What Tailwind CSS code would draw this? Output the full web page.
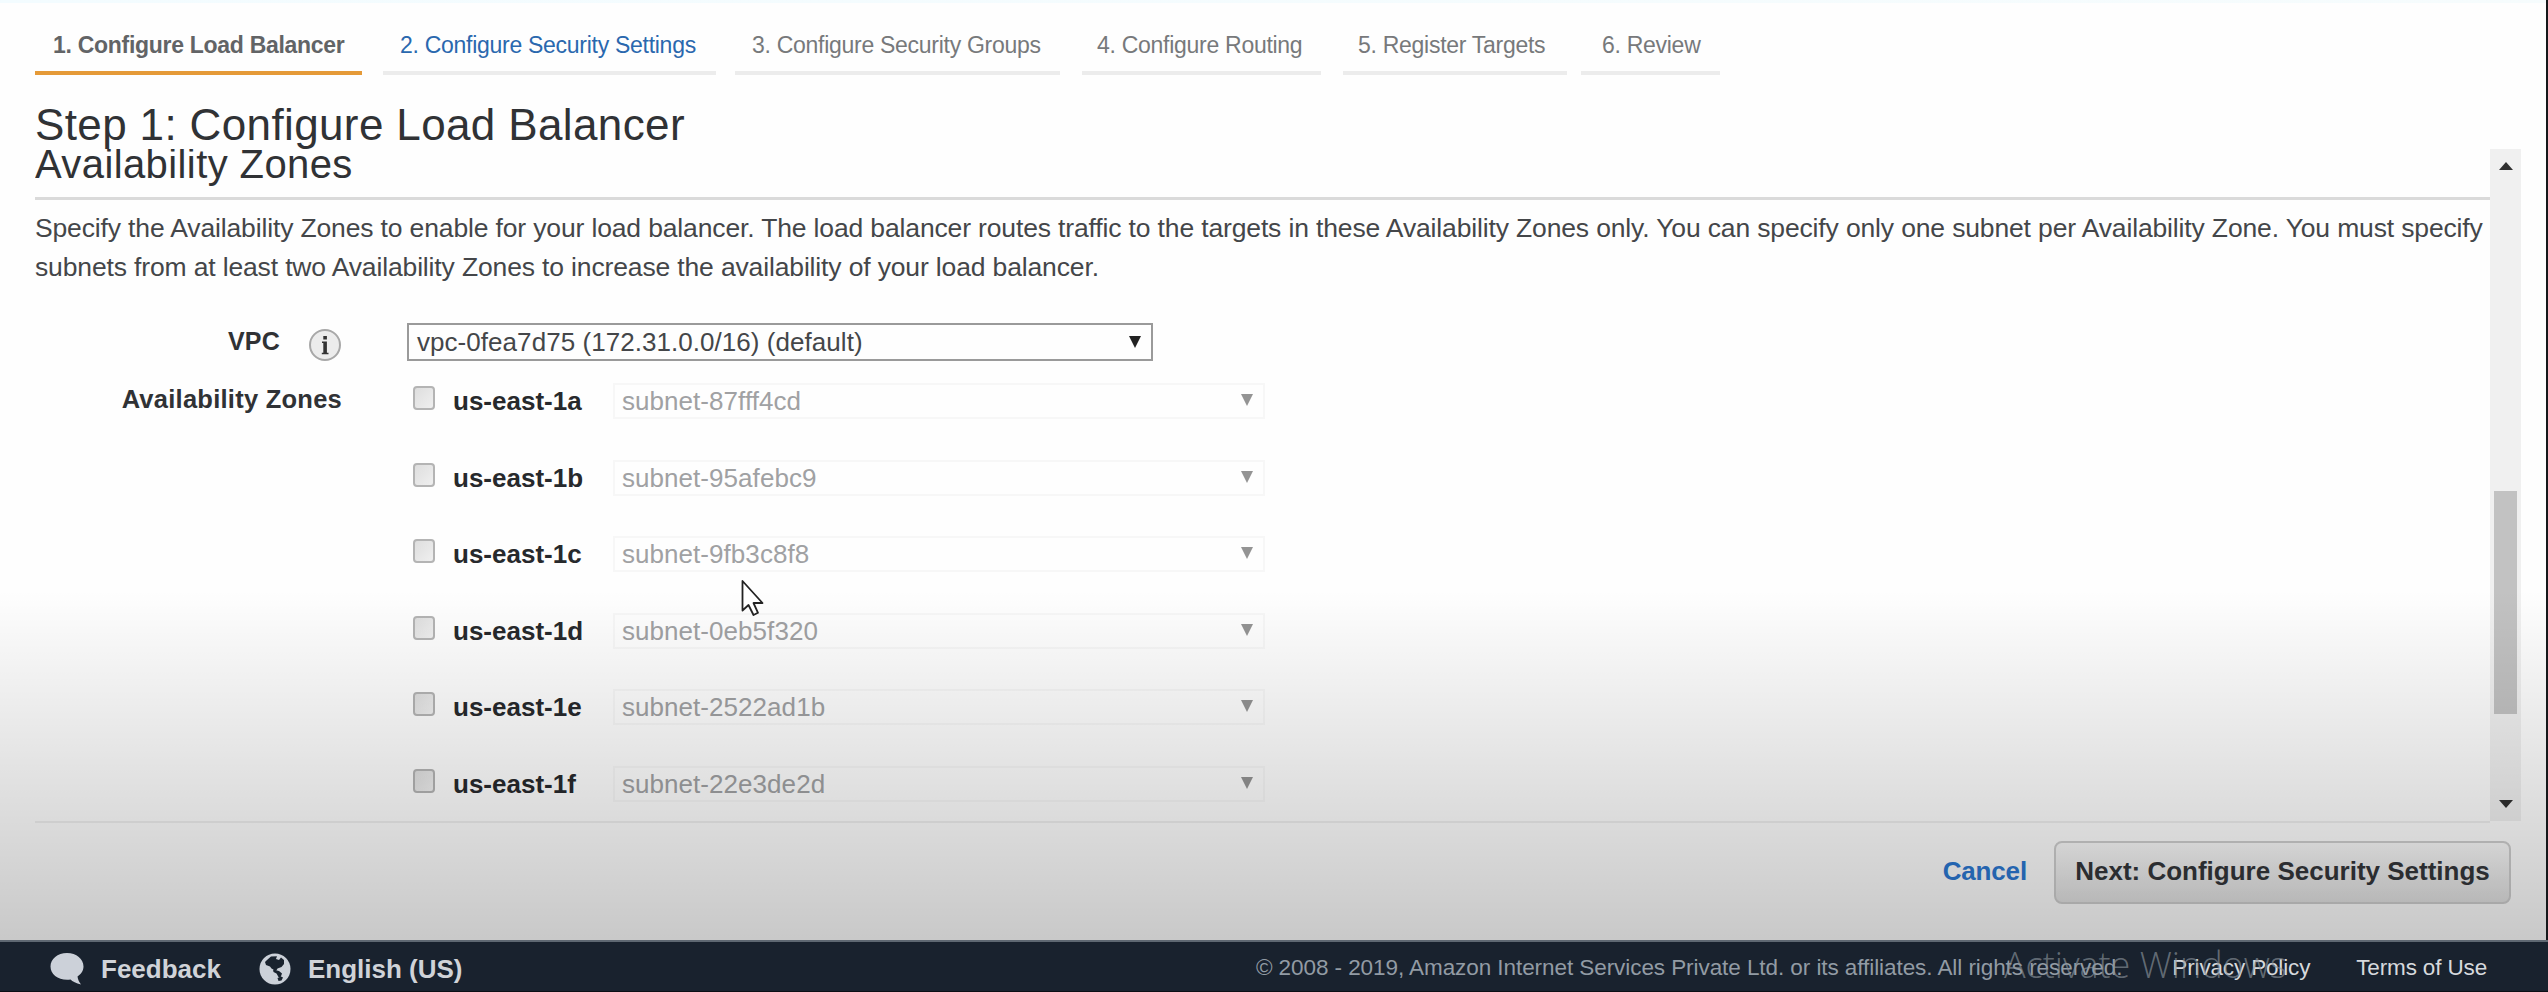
<!DOCTYPE html>
<html lang="en">
<head>
<meta charset="utf-8">
<title>Configure Load Balancer</title>
<script src="https://cdn.jsdelivr.net/npm/@tailwindcss/browser@4"></script>
</head>
<body class="relative flex h-[992px] w-[2548px] flex-col overflow-hidden bg-[#fefefe] font-['Liberation_Sans',Arial,sans-serif] text-[#444649] whitespace-nowrap">
  <div class="h-[3px] shrink-0 bg-linear-to-r from-[#f3fcff] to-[#f6fcfd]"></div>

  <!-- Wizard steps -->
  <nav class="flex h-[72px] shrink-0 pl-[35px] text-[23px] leading-[30px] tracking-[-0.28px] text-[#77797b]">
    <div class="mr-[21px] w-[327px] border-b-4 border-[#e59a38] pt-[27px] pl-[18px] font-bold tracking-[-0.29px] text-[#626466]">1. Configure Load Balancer</div>
    <div class="mr-[19px] w-[333px] border-b-4 border-[#ececec] pt-[27px] pl-[17px] text-[#2a68ae]">2. Configure Security Settings</div>
    <div class="mr-[22px] w-[325px] border-b-4 border-[#ececec] pt-[27px] pl-[17px]">3. Configure Security Groups</div>
    <div class="mr-[22px] w-[239px] border-b-4 border-[#ececec] pt-[27px] pl-[15px]">4. Configure Routing</div>
    <div class="mr-[14px] w-[224px] border-b-4 border-[#ececec] pt-[27px] pl-[15px]">5. Register Targets</div>
    <div class="w-[139px] border-b-4 border-[#ececec] pt-[27px] pl-[21px]">6. Review</div>
  </nav>

  <h1 class="h-[74px] shrink-0 pt-[28px] pl-[35px] text-[44px] leading-[44px] tracking-[0.37px] text-[#303235]">Step 1: Configure Load Balancer</h1>

  <!-- Scrolling form -->
  <div class="ml-[35px] flex h-[672px] shrink-0">
    <main class="w-[2455px] overflow-hidden">
      <h2 class="-mt-[7px] h-[58px] border-b-3 border-[#dadada] text-[40px] leading-[44px] tracking-[0.4px] text-[#303235]">Availability Zones</h2>
      <p class="mt-[9px] text-[26.5px] leading-[39px] tracking-[-0.145px]">Specify the Availability Zones to enable for your load balancer. The load balancer routes traffic to the targets in these Availability Zones only. You can specify only one subnet per Availability Zone. You must specify<br>subnets from at least two Availability Zones to increase the availability of your load balancer.</p>

      <div class="mt-[36px] flex h-[37px] items-start">
        <div class="w-[245px] text-right text-[25px] leading-[37px] font-bold tracking-[0.2px] text-[#303235]">VPC</div>
        <svg class="mt-[5px] ml-[28px] h-[34px] w-[34px]" viewBox="0 0 34 34"><circle cx="17" cy="17" r="15" fill="#ececec" stroke="#a8a8a8" stroke-width="2"/><rect x="15.300" y="8" width="3.600" height="3.500" fill="#333"/><path d="M14 13.500H18.900V24.800H20.500V26.200H13.800V24.800H15.300V14.900H14Z" fill="#333"/></svg>
        <div class="ml-[65px] flex h-[38px] w-[746px] items-center justify-between border-2 border-[#9a9a9a] pr-[10px] pl-[8px] text-[26px] leading-[34px] tracking-[0.05px]">
          <span>vpc-0fea7d75 (172.31.0.0/16) (default)</span>
          <svg class="h-[12px] w-[12px]" viewBox="0 0 12 12"><path d="M0 0H12L6 12Z" fill="#222"/></svg>
        </div>
      </div>

      <div class="mt-[23px] flex">
        <div class="w-[307px] text-right text-[25.500px] leading-[33px] font-bold tracking-[0.25px] text-[#303235]">Availability Zones</div>
        <div id="zones" class="ml-[71px] flex flex-col gap-[40.5px]"></div>
      </div>
    </main>

    <!-- Scrollbar -->
    <div class="flex w-[31px] flex-col items-center bg-[#f0f0f0]">
      <svg class="mt-[13px] h-[8px] w-[14px] shrink-0" viewBox="0 0 14 8"><path d="M0 8H14L7 0Z" fill="#303030"/></svg>
      <div class="mt-[321px] h-[223px] w-[23px] shrink-0 bg-[#c2c2c2]"></div>
      <svg class="mt-[86px] h-[8px] w-[14px] shrink-0" viewBox="0 0 14 8"><path d="M0 0H14L7 8Z" fill="#303030"/></svg>
    </div>
  </div>

  <!-- Actions -->
  <div class="ml-[35px] h-[2px] w-[2455px] shrink-0 bg-[#efefef]"></div>
  <div class="mr-[37px] ml-[35px] flex h-[117px] shrink-0 justify-end pt-[18px] text-[26px] font-bold">
    <a class="mr-[27px] pt-[13px] leading-[34px] tracking-[-0.15px] text-[#2b78d2]">Cancel</a>
    <button class="h-[63px] w-[457px] rounded-[8px] border-2 border-[#cfcfcf] bg-linear-to-b from-[#fafafa] to-[#e2e2e2] pb-[3px] text-center leading-[34px] text-[#34363a]">Next: Configure Security Settings</button>
  </div>

  <!-- Shading that darkens toward the bottom of the page -->
  <div class="pointer-events-none absolute top-[590px] left-0 h-[350px] w-[2546px] bg-linear-to-b from-black/0 to-black/21"></div>
  <div class="absolute top-0 right-0 h-[940px] w-[2px] bg-[#15171a]"></div>

  <footer class="relative flex h-[52px] shrink-0 items-start border-t-2 border-[#5f6872] bg-[#19222e] pt-[11px] leading-[32px]">
    <svg class="ml-[50px] h-[32px] w-[35px]" viewBox="0 0 35 32"><path d="M17 0C26.500 0 33.500 6 33.500 13.500C33.500 18 31 21 27.500 23.500C28 26.500 29 29 31 31.500C26 30.500 22.500 28.500 20.500 26.600C9 28 0.500 22 0.500 13.500C0.500 6 7.500 0 17 0Z" fill="#ccd1d9"/></svg>
    <span class="ml-[16px] text-[26px] font-bold text-[#d0d3d8]">Feedback</span>
    <svg class="ml-[38px] h-[32px] w-[32px]" viewBox="0 0 32 32"><circle cx="16" cy="16" r="15.500" fill="#ccd1d9"/><path d="M8 7L12 3.500L18 3.200L17 6L20 7L22 4.500L25 7L25 11L22.500 14L18.500 15.500L17 18L12.500 15.500L11 13.500L7 12L6 9Z" fill="#19222e"/><path d="M14 16.500L20 18L23 20.500L21.500 24.500L19.500 24L17.500 20.500L14.500 19Z" fill="#19222e"/><path d="M18.500 25L22 23.500L24 24.500L22.500 27.500L19.500 28Z" fill="#19222e"/></svg>
    <span class="ml-[17px] text-[26px] font-bold text-[#d0d3d8]">English (US)</span>
    <span class="-mt-px ml-auto text-[22.500px] tracking-[-0.07px] text-[#929ba4]">© 2008 - 2019, Amazon Internet Services Private Ltd. or its affiliates. All rights reserved.</span>
    <span class="-mt-px ml-[50px] text-[22.500px] tracking-[-0.15px] text-[#d6d9dd]">Privacy Policy</span>
    <span class="-mt-px mr-[61px] ml-[46px] text-[22.500px] tracking-[-0.15px] text-[#d6d9dd]">Terms of Use</span>
    <span class="absolute top-[3px] left-[2004px] font-['Open_Sans',sans-serif] text-[36px] leading-[40px] font-light text-[#8c949c]/65">Activate Windows</span>
  </footer>
  <div class="absolute bottom-0 left-0 h-[1px] w-full bg-[#0c0f16]"></div>

  <!-- Mouse pointer -->
  <svg class="absolute top-[579px] left-[741px] h-[38px] w-[24px]" viewBox="0 0 24 38"><path d="M1.500 2V31.500L7.500 26L12.500 36L17 33.800L12.500 24H21.500Z" fill="#fff" stroke="#222" stroke-width="1.800" stroke-linejoin="round"/></svg>

  <template id="zone">
    <div class="flex h-[36px]">
      <span class="mt-[3px] h-[24px] w-[22px] rounded-[4px] border-2 border-[#b4b4b4] bg-linear-to-br from-[#dedede] to-[#efefef]"></span>
      <label class="ml-[18px] w-[160px] text-[26px] leading-[36px] font-bold text-[#27292c]"></label>
      <div class="flex w-[652px] items-center justify-between border-2 border-[#f7f7f7] pr-[10px] pl-[7px] text-[26px] leading-[32px] tracking-[0.05px] text-[#a0a1a3]">
        <span></span>
        <svg class="-mt-[2px] h-[12px] w-[12px]" viewBox="0 0 12 12"><path d="M0 0H12L6 12Z" fill="#949494"/></svg>
      </div>
    </div>
  </template>
  <script>
    const zones = [['us-east-1a','subnet-87fff4cd'],['us-east-1b','subnet-95afebc9'],['us-east-1c','subnet-9fb3c8f8'],['us-east-1d','subnet-0eb5f320'],['us-east-1e','subnet-2522ad1b'],['us-east-1f','subnet-22e3de2d']];
    const tpl = document.getElementById('zone');
    for (const [zone, subnet] of zones) {
      const row = tpl.content.cloneNode(true);
      row.querySelector('label').textContent = zone;
      row.querySelector('div div span').textContent = subnet;
      document.getElementById('zones').append(row);
    }
  </script>
</body>
</html>
